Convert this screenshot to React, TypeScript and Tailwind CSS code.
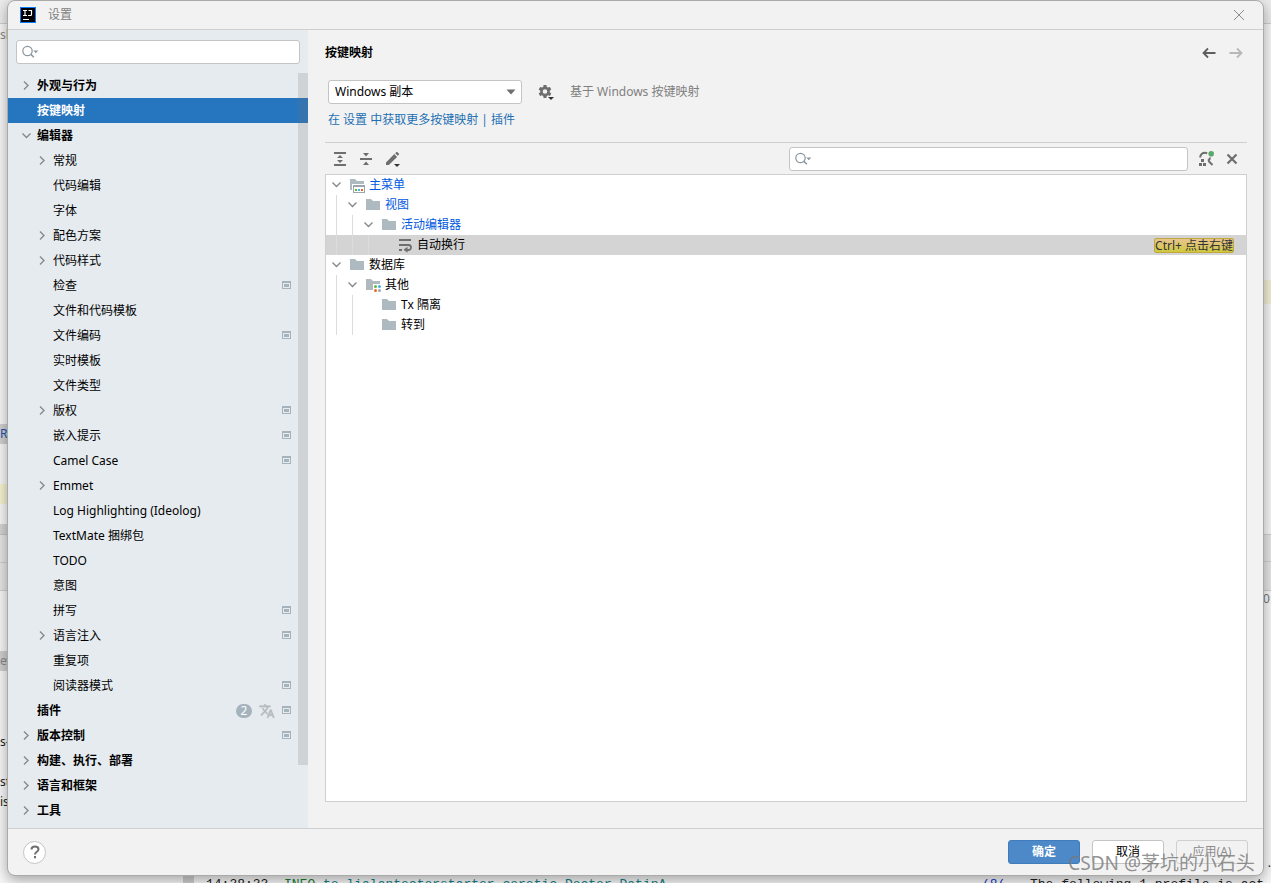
import type { ReactNode } from "react";
import clsx from "clsx";

type NavItem = {
  label: string;
  level: 0 | 1;
  arrow?: "open" | "closed";
  project?: boolean;
  selected?: boolean;
  plugins?: boolean;
};

const NAV: NavItem[] = [
  { label: "外观与行为", level: 0, arrow: "closed" },
  { label: "按键映射", level: 0, selected: true },
  { label: "编辑器", level: 0, arrow: "open" },
  { label: "常规", level: 1, arrow: "closed" },
  { label: "代码编辑", level: 1 },
  { label: "字体", level: 1 },
  { label: "配色方案", level: 1, arrow: "closed" },
  { label: "代码样式", level: 1, arrow: "closed" },
  { label: "检查", level: 1, project: true },
  { label: "文件和代码模板", level: 1 },
  { label: "文件编码", level: 1, project: true },
  { label: "实时模板", level: 1 },
  { label: "文件类型", level: 1 },
  { label: "版权", level: 1, arrow: "closed", project: true },
  { label: "嵌入提示", level: 1, project: true },
  { label: "Camel Case", level: 1, project: true },
  { label: "Emmet", level: 1, arrow: "closed" },
  { label: "Log Highlighting (Ideolog)", level: 1 },
  { label: "TextMate 捆绑包", level: 1 },
  { label: "TODO", level: 1 },
  { label: "意图", level: 1 },
  { label: "拼写", level: 1, project: true },
  { label: "语言注入", level: 1, arrow: "closed", project: true },
  { label: "重复项", level: 1 },
  { label: "阅读器模式", level: 1, project: true },
  { label: "插件", level: 0, project: true, plugins: true },
  { label: "版本控制", level: 0, arrow: "closed", project: true },
  { label: "构建、执行、部署", level: 0, arrow: "closed" },
  { label: "语言和框架", level: 0, arrow: "closed" },
  { label: "工具", level: 0, arrow: "closed" },
];

type ActionRow = {
  label: string;
  depth: number;
  icon: "menu" | "folder" | "group" | "wrap";
  leaf?: boolean;
  changed?: boolean;
  selected?: boolean;
  shortcut?: string;
};

const ACTIONS: ActionRow[] = [
  { label: "主菜单", depth: 0, icon: "menu", changed: true },
  { label: "视图", depth: 1, icon: "folder", changed: true },
  { label: "活动编辑器", depth: 2, icon: "folder", changed: true },
  { label: "自动换行", depth: 3, icon: "wrap", leaf: true, selected: true, shortcut: "Ctrl+ 点击右键" },
  { label: "数据库", depth: 0, icon: "folder" },
  { label: "其他", depth: 1, icon: "group" },
  { label: "Tx 隔离", depth: 2, icon: "folder", leaf: true },
  { label: "转到", depth: 2, icon: "folder", leaf: true },
];

function Chevron({ open }: { open: boolean }) {
  return (
    <svg viewBox="0 0 16 16" className="h-4 w-4 shrink-0" fill="none" stroke="#868a8d" strokeWidth={1.4}>
      <path d={open ? "M4.5 5.500l4 4 4-4" : "M6 3.500l4 4-4 4"} />
    </svg>
  );
}

function ProjectIcon() {
  return (
    <svg viewBox="0 0 9 10" className="h-2.5 w-[9px] shrink-0" shapeRendering="crispEdges">
      <path fill="#a5b3bc" fillRule="evenodd" d="M0 0h9v8H0zM1 2v5h7V2z" />
      <path fill="#a5b3bc" d="M2 3h5v3H2z" />
    </svg>
  );
}

function TranslateIcon() {
  return (
    <svg viewBox="0 0 24 24" className="h-4 w-4 shrink-0" fill="#b4babe" stroke="#b4babe" strokeWidth={0.8}>
      <path d="M12.87 15.07l-2.54-2.51.03-.03A17.52 17.52 0 0 0 14.07 6H17V4h-7V2H8v2H1v2h11.17C11.5 7.92 10.44 9.75 9 11.35 8.07 10.32 7.3 9.19 6.69 8h-2c.73 1.63 1.73 3.17 2.98 4.56l-5.09 5.02L4 19l5-5 3.11 3.11.76-2.04zM18.5 10h-2L12 22h2l1.12-3h4.75L21 22h2l-4.5-12zm-2.62 7l1.62-4.33L19.12 17h-3.24z" />
    </svg>
  );
}

function SearchIcon() {
  return (
    <svg viewBox="0 0 18 16" className="pointer-events-none absolute top-1 left-1.5 h-4 w-[18px]" fill="none">
      <circle cx="5.5" cy="7" r="4.7" stroke="#8a959d" strokeWidth={1.2} />
      <path d="M8.800 10.300l3 3" stroke="#8a959d" strokeWidth={1.6} />
      <path d="M11.300 6.500h5L13.800 9.300z" fill="#8a959d" />
    </svg>
  );
}

function SearchBox({ label, className }: { label: string; className?: string }) {
  return (
    <label className={clsx("relative block", className)}>
      <span className="sr-only">{label}</span>
      <SearchIcon />
      <input
        type="text"
        className="block h-6 w-full rounded-[3px] border border-[#c4c4c4] bg-white pr-2 pl-7 outline-none"
      />
    </label>
  );
}

function ActionIcon({ kind }: { kind: ActionRow["icon"] }) {
  if (kind === "wrap") {
    return (
      <svg viewBox="0 0 16 16" className="h-4 w-4 shrink-0" fill="none" stroke="#6e6e6e">
        <path d="M2 3h12M2 8h10" strokeWidth={2} />
        <path d="M2 13h3" strokeWidth={2} />
        <path d="M11.500 8a2.500 2.500 0 0 1 0 5H10" strokeWidth={1.8} />
        <path d="M10.500 9.800v6L6.500 12.800z" fill="#6e6e6e" stroke="none" />
      </svg>
    );
  }
  return (
    <svg viewBox="0 0 16 16" className="h-4 w-4 shrink-0">
      <path fill="#aeb9c0" d="M1 2h5l2 2h7v9H1z" />
      {kind === "menu" && (
        <>
          <path fill="#fff" d="M3 7h13v9H3z" />
          <path fill="#9aa7b0" fillRule="evenodd" d="M4 8h12v8H4zM5 10v5h10v-5z" />
          <path fill="#62b543" d="M6 12h2v2H6z" />
          <path fill="#40b6e0" d="M9 12h2v2H9z" />
          <path fill="#f26522" d="M12 12h2v2h-2z" />
        </>
      )}
      {kind === "group" && (
        <>
          <path fill="#fff" d="M8 7h8v9H8z" />
          <circle cx="10.5" cy="9.5" r="1.5" fill="#62b543" />
          <circle cx="14.5" cy="9.5" r="1.5" fill="#40b6e0" />
          <circle cx="10.5" cy="13.5" r="1.5" fill="#f26522" />
          <circle cx="14.5" cy="13.5" r="1.5" fill="#9aa7b0" />
        </>
      )}
    </svg>
  );
}

function ToolButton({ label, disabled, children }: { label: string; disabled?: boolean; children: ReactNode }) {
  return (
    <button type="button" aria-label={label} disabled={disabled} className="flex h-4 w-4 items-center justify-center">
      {children}
    </button>
  );
}

function Sidebar() {
  return (
    <aside className="flex w-[300px] shrink-0 flex-col bg-[#e6ebef]">
      <SearchBox label="搜索设置" className="mt-2.5 mb-2 ml-2 w-[284px]" />
      <nav className="relative mt-px flex-1">
        <ul>
          {NAV.map((item) => (
            <li key={item.label}>
              <a
                href="#"
                className={clsx(
                  "flex h-[25px] items-center gap-[3px] pr-[17px]",
                  item.level === 0 ? "pl-2.5 font-bold" : "pl-[26px]",
                  item.selected ? "bg-[#2675bf] text-white" : "text-black",
                )}
              >
                {item.arrow ? <Chevron open={item.arrow === "open"} /> : <span className="w-4 shrink-0" />}
                <span className="flex-1 truncate">{item.label}</span>
                <span className="flex items-center gap-[7px]">
                  {item.plugins && (
                    <>
                      <span className="flex h-3.5 w-4 items-center justify-center rounded-full bg-[#a5b3bc] font-normal text-white">
                        2
                      </span>
                      <TranslateIcon />
                    </>
                  )}
                  {item.project && <ProjectIcon />}
                </span>
              </a>
            </li>
          ))}
        </ul>
        <div className="absolute top-0 right-0 h-11/12 w-2.5 bg-[#737373]/20" />
      </nav>
    </aside>
  );
}

function SchemeRow() {
  return (
    <div className="flex items-center">
      <div className="relative ml-[3px] w-[194px]">
        <select
          aria-label="按键映射方案"
          className="block h-6 w-full appearance-none rounded-[3px] border border-[#c4c4c4] bg-white pr-6 pl-1.5 text-black"
        >
          <option>Windows 副本</option>
        </select>
        <svg viewBox="0 0 10 6" className="pointer-events-none absolute top-[9px] right-1.5 h-1.5 w-2.5" fill="#6e6e6e">
          <path d="M0.5 0.5h9L5 5.5z" />
        </svg>
      </div>
      <button type="button" aria-label="方案操作" className="ml-4 flex h-5 w-4 items-center">
        <svg viewBox="0 0 16 18" className="h-[18px] w-4">
          <path
            fill="#6e6e6e"
            fillRule="evenodd"
            d="M5.600 2h2.800l.4 1.900 1.200.7 1.900-.6 1.400 2.400-1.500 1.300v1.500l1.500 1.300-1.400 2.400-1.900-.6-1.200.7-.4 1.900H5.600L5.200 13 4 12.300l-1.900.6L.7 10.500l1.500-1.300V7.700L.7 6.400 2.100 4l1.900.6 1.200-.7zM7 6.200a2.300 2.300 0 1 0 0 4.600 2.300 2.300 0 0 0 0-4.600z"
          />
          <path fill="#f2f2f2" d="M9 13h7v5H9z" />
          <path fill="#333" d="M10 14h6l-3 3z" />
        </svg>
      </button>
      <span className="ml-4 text-[#808080]">基于 Windows 按键映射</span>
    </div>
  );
}

function Toolbar() {
  return (
    <div className="flex h-8 items-center gap-2.5 border-t border-[#cfcfcf] px-[7px]">
      <ToolButton label="全部展开">
        <svg viewBox="0 0 16 16" className="h-4 w-4" fill="#6e6e6e">
          <path d="M2 1h12v2H2zM2 13h12v2H2zM8 4l3 3H5zM8 12l3-3H5z" />
        </svg>
      </ToolButton>
      <ToolButton label="全部折叠">
        <svg viewBox="0 0 16 16" className="h-4 w-4" fill="#6e6e6e">
          <path d="M2 7h12v2H2zM5 2h6L8 5.500zM5 14h6l-3-3.500z" />
        </svg>
      </ToolButton>
      <ToolButton label="编辑快捷键">
        <svg viewBox="0 0 16 16" className="h-4 w-4">
          <path fill="#6e6e6e" d="M2 11.400L10.300 3.100l2.800 2.800L4.800 14H2zM11.200 2.200l1-1c.4-.4.9-.4 1.300 0l1.300 1.300c.4.4.4.9 0 1.300l-1 1z" />
          <path fill="#333" d="M10 13h6l-3 3z" />
        </svg>
      </ToolButton>
      <SearchBox label="搜索操作" className="ml-auto w-[399px]" />
      <ToolButton label="按快捷键查找">
        <svg viewBox="0 0 16 16" className="h-4 w-4">
          <path
            d="M2.200 6.500C2.200 3.500 4.500 1.800 7 1.800c.8 0 1.500.2 2.200.5M12 6.500c0 1.500-.8 2.500-2 3.300M10.500 10l4 4"
            fill="none"
            stroke="#6e6e6e"
            strokeWidth={2}
          />
          <path fill="#6e6e6e" d="M3 8h3v3H3zM1 12h3v3H1zM5 12h3v3H5z" />
          <circle cx="13.200" cy="2.800" r="2.800" fill="#59a869" />
        </svg>
      </ToolButton>
      <ToolButton label="清除">
        <svg viewBox="0 0 16 16" className="h-4 w-4" fill="none" stroke="#6e6e6e" strokeWidth={2.2}>
          <path d="M3.500 3.500l9 9M12.500 3.500l-9 9" />
        </svg>
      </ToolButton>
    </div>
  );
}

function ActionTree() {
  return (
    <ul className="flex-1 border border-[#cfcfcf] bg-white">
      {ACTIONS.map((row) => (
        <li key={row.label} className={clsx("flex h-5 items-center pr-3", row.selected && "bg-[#d4d4d4]")}>
          {Array.from({ length: row.depth }, (_, i) => (
            <span key={i} className="flex w-4 shrink-0 justify-center self-stretch pl-[5px]">
              <span className="w-px bg-[#dcdcdc]" />
            </span>
          ))}
          <span className="flex w-[23px] shrink-0 pl-0.5">{!row.leaf && <Chevron open />}</span>
          <ActionIcon kind={row.icon} />
          <span className={clsx("ml-1 flex-1", row.changed ? "text-[#0058e0]" : "text-black")}>{row.label}</span>
          {row.shortcut && (
            <kbd className="h-[15px] rounded-xs border border-[#c0a93e] bg-linear-to-b from-[#e9c48c] to-[#cfc93a] font-[inherit] text-xs leading-[13px] text-[#333]">
              {row.shortcut}
            </kbd>
          )}
        </li>
      ))}
    </ul>
  );
}

function KeymapPage() {
  return (
    <main className="flex min-w-0 flex-1 flex-col pr-4 pb-[26px] pl-[17px]">
      <div className="flex h-[45px] items-center justify-between pr-[3px]">
        <h1 className="font-bold text-black">按键映射</h1>
        <div className="flex gap-[11px]">
          <ToolButton label="后退">
            <svg viewBox="0 0 16 16" className="h-4 w-4" fill="none" stroke="#5e5e5e" strokeWidth={1.8}>
              <path d="M14.500 8H2.500M7 3.500L2.500 8 7 12.500" />
            </svg>
          </ToolButton>
          <ToolButton label="前进" disabled>
            <svg viewBox="0 0 16 16" className="h-4 w-4" fill="none" stroke="#b8b8b8" strokeWidth={1.8}>
              <path d="M1.500 8h12M9 3.500L13.500 8 9 12.500" />
            </svg>
          </ToolButton>
        </div>
      </div>
      <div className="mt-[5px]">
        <SchemeRow />
      </div>
      <p className="mt-2 mb-3.5 ml-[3px] text-[#2470b3]">
        <a href="#">在 设置 中获取更多按键映射</a> | <a href="#">插件</a>
      </p>
      <Toolbar />
      <ActionTree />
    </main>
  );
}

function Footer() {
  const button = "h-6 w-[72px] rounded-[3px] border";
  return (
    <footer className="flex h-[47px] items-center gap-3 border-t border-[#cfcfcf] px-[15px]">
      <button
        type="button"
        aria-label="帮助"
        className="mr-auto flex h-[23px] w-[23px] items-center justify-center rounded-full border border-[#c4c4c4] bg-white"
      >
        <svg viewBox="0 0 10 14" className="h-3.5 w-2.5" fill="none" stroke="#6e6e6e" strokeWidth={2}>
          <path d="M1.500 4.500C1.500 2.500 3 1.500 5 1.500s3.500 1 3.500 3C8.500 6.800 5 6.800 5 9.500" />
          <path d="M5 11v2.200" />
        </svg>
      </button>
      <button type="submit" className={clsx(button, "border-[#3f7cbb] bg-[#4d89c9] font-bold text-white")}>
        确定
      </button>
      <button type="button" className={clsx(button, "border-[#c4c4c4] bg-white text-black")}>
        取消
      </button>
      <button type="button" disabled className={clsx(button, "border-[#cfcfcf] text-[#8c8c8c]")}>
        应用(A)
      </button>
    </footer>
  );
}

// Slices of the editor window that show round the dialog
function Backdrop() {
  return (
    <div
      aria-hidden="true"
      className="absolute inset-0 flex flex-col overflow-hidden bg-[#f7f7f7] font-['Noto_Sans','Noto_Sans_CJK_SC',sans-serif] text-xs text-[#222]"
    >
      <div className="h-6 shrink-0 border-b border-[#cfcfcf] bg-[#ececec]" />
      <div className="flex h-[851px] shrink-0 justify-between">
        <div className="w-2 overflow-hidden whitespace-nowrap">
          <p className="h-[400px] pt-[3px] text-[#888]">sl</p>
          <p className="h-5 bg-[#d0d0d0] leading-5 text-[#2050b0]">Ro</p>
          <div className="mt-10 h-5 bg-[#f5f3cf]" />
          <div className="mt-5 h-[11px] border-b border-[#c4c4c4] bg-[#d4d4d4]" />
          <div className="h-7 border-b border-[#cfcfcf] bg-[#e6e6e6]" />
          <div className="h-7 border-b border-[#cfcfcf] bg-[#e6e6e6]" />
          <p className="mt-[60px] h-5 bg-[#cfcfcf] leading-5 text-[#888]">ev</p>
          <p className="mt-[61px] h-5 leading-5">s-</p>
          <p className="mt-5 h-5 leading-5">st</p>
          <p className="h-5 leading-5">is</p>
        </div>
        <div className="w-2 overflow-hidden">
          <div className="mt-64 h-6 bg-[#f3efd5]" />
          <div className="mt-[230px] h-7 border-y border-[#cfcfcf] bg-[#e6e6e6]" />
          <div className="h-[29px] border-b border-[#cfcfcf] bg-[#e6e6e6]" />
          <p className="text-[#777]">0</p>
          <p className="mt-[248px] text-right">.</p>
        </div>
      </div>
      <div className="flex h-5 shrink-0 font-['Liberation_Mono',monospace] text-[13px] leading-5 whitespace-pre">
        <div className="w-[183px] shrink-0" />
        <div className="mr-3 w-[11px] shrink-0 bg-[#d0d0d0]" />
        <span>14:38:33 </span>
        <span className="text-[#178037]"> INFO</span>
        <span className="flex-1 text-[#14808a]"> to.lialantectorstarter.coretic.Doctor.DatinA</span>
        <span className="w-12 shrink-0 text-[#2040d0]">(8(</span>
        <span className="w-[241px] shrink-0">The following 1 profile is act</span>
      </div>
    </div>
  );
}

export default function App() {
  return (
    <div className="relative flex min-h-screen flex-col">
      <Backdrop />
      <div
        role="dialog"
        aria-label="设置"
        className="relative mx-[7px] mb-[7px] flex flex-1 flex-col overflow-hidden rounded-lg border border-[#aaa] bg-[#f2f2f2] font-['Noto_Sans','Noto_Sans_CJK_SC',sans-serif] text-xs shadow-[0_4px_14px_rgba(0,0,0,0.35)]"
      >
        <header className="flex h-[29px] items-center border-b border-[#cfcfcf] pr-[18px] pl-3">
          <svg viewBox="0 0 16 16" className="h-4 w-4">
            <path fill="#087cfa" d="M0 0h16v16H0z" />
            <path fill="#000" d="M1 1h14v14H1z" />
            <path
              d="M3 3.500h4M5 3.500v5M3 8.500h4M8.500 3.500h3v4c0 .7-.4 1-1 1H8"
              fill="none"
              stroke="#fff"
              strokeWidth={1.2}
            />
            <path fill="#fff" d="M3 12h6v1H3z" />
          </svg>
          <span className="ml-3 flex-1 text-[#808080]">设置</span>
          <button type="button" aria-label="关闭">
            <svg viewBox="0 0 12 12" className="h-3 w-3" fill="none" stroke="#8c8c8c">
              <path d="M1 1l10 10M11 1L1 11" />
            </svg>
          </button>
        </header>
        <div className="flex flex-1">
          <Sidebar />
          <KeymapPage />
        </div>
        <Footer />
      </div>
      <p className="pointer-events-none absolute right-4 bottom-1.5 font-['Noto_Sans','Noto_Sans_CJK_SC',sans-serif] text-[19px] leading-7 text-[#777]/80">
        CSDN @茅坑的小石头
      </p>
    </div>
  );
}
